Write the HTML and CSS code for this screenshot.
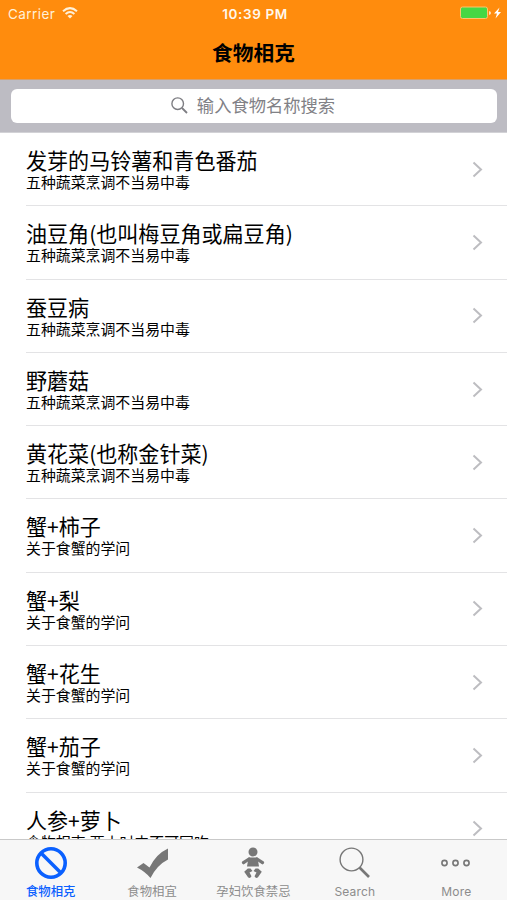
FILE: index.html
```html
<!DOCTYPE html>
<html lang="zh-CN">
<head>
<meta charset="utf-8">
<title>食物相克</title>
<link rel="stylesheet" href="styles.css">
</head>
<body>
<div class="app">
  <header class="header">
    <div class="status">
      <div class="carrier"><span>Carrier</span>
        <svg width="16" height="12" viewBox="0 0 16 12" fill="none" stroke="#fff1d8" stroke-width="2"><path d="M1 4.200Q8-2 15 4.200M3.600 7Q8 3.100 12.400 7"/><path d="M5.500 9Q8 6.800 10.500 9L8 11.500Z" fill="#fff1d8" stroke="none"/></svg>
      </div>
      <div class="time">10:39 PM</div>
      <svg class="battery" width="42" height="14" viewBox="0 0 42 14"><rect x=".5" y="1" width="27" height="11.500" rx="2" fill="#45d744" stroke="#ffc36b"/><path d="M29 5q2 .3 2 2t-2 2z" fill="#ffe4bd"/><path d="M39.500 1.500l-5.500 6h3l-1.500 5 5.500-6.500h-3z" fill="#fff"/></svg>
    </div>
    <h1 class="title">食物相克</h1>
  </header>
  <div class="searchbar"><div class="field">
    <svg width="17" height="17" viewBox="0 0 17 17" fill="none" stroke="#7d7d82" stroke-width="1.400"><circle cx="6.700" cy="6.700" r="5.800"/><path d="M11 11l5 5" stroke-width="1.800"/></svg>
    <span>输入食物名称搜索</span>
  </div></div>
  <main class="list">
    <div class="row"><div class="text"><div class="name">发芽的马铃薯和青色番茄</div><div class="note">五种蔬菜烹调不当易中毒</div></div><svg class="chev" viewBox="0 0 11 17"><path d="M1.500 1.500l7.500 7-7.500 7"/></svg></div>
    <div class="row"><div class="text"><div class="name">油豆角(也叫梅豆角或扁豆角)</div><div class="note">五种蔬菜烹调不当易中毒</div></div><svg class="chev" viewBox="0 0 11 17"><path d="M1.500 1.500l7.500 7-7.500 7"/></svg></div>
    <div class="row"><div class="text"><div class="name">蚕豆病</div><div class="note">五种蔬菜烹调不当易中毒</div></div><svg class="chev" viewBox="0 0 11 17"><path d="M1.500 1.500l7.500 7-7.500 7"/></svg></div>
    <div class="row"><div class="text"><div class="name">野蘑菇</div><div class="note">五种蔬菜烹调不当易中毒</div></div><svg class="chev" viewBox="0 0 11 17"><path d="M1.500 1.500l7.500 7-7.500 7"/></svg></div>
    <div class="row"><div class="text"><div class="name">黄花菜(也称金针菜)</div><div class="note">五种蔬菜烹调不当易中毒</div></div><svg class="chev" viewBox="0 0 11 17"><path d="M1.500 1.500l7.500 7-7.500 7"/></svg></div>
    <div class="row"><div class="text"><div class="name">蟹+柿子</div><div class="note">关于食蟹的学问</div></div><svg class="chev" viewBox="0 0 11 17"><path d="M1.500 1.500l7.500 7-7.500 7"/></svg></div>
    <div class="row"><div class="text"><div class="name">蟹+梨</div><div class="note">关于食蟹的学问</div></div><svg class="chev" viewBox="0 0 11 17"><path d="M1.500 1.500l7.500 7-7.500 7"/></svg></div>
    <div class="row"><div class="text"><div class="name">蟹+花生</div><div class="note">关于食蟹的学问</div></div><svg class="chev" viewBox="0 0 11 17"><path d="M1.500 1.500l7.500 7-7.500 7"/></svg></div>
    <div class="row"><div class="text"><div class="name">蟹+茄子</div><div class="note">关于食蟹的学问</div></div><svg class="chev" viewBox="0 0 11 17"><path d="M1.500 1.500l7.500 7-7.500 7"/></svg></div>
    <div class="row"><div class="text"><div class="name">人参+萝卜</div><div class="note">食物相克,两小时内不可同吃</div></div><svg class="chev" viewBox="0 0 11 17"><path d="M1.500 1.500l7.500 7-7.500 7"/></svg></div>
  </main>
  <nav class="tabs">
    <div class="tab active"><svg viewBox="0 0 36 36"><g fill="none" stroke="currentColor" stroke-width="3.600"><circle cx="18" cy="18" r="14.200"/><path d="M8 8l20 20"/></g></svg><span>食物相克</span></div>
    <div class="tab"><svg viewBox="0 0 36 36"><path fill="#777" d="M3 22.500l6.500-4.500 6 4.500Q22 9 34 3.500V14.500Q23 20 16.500 33Q11 26.500 3 22.500z"/></svg><span>食物相宜</span></div>
    <div class="tab"><svg viewBox="0 0 36 36"><circle cx="18" cy="7" r="4.500" fill="#777"/><path d="M8.500 17.700L14 14M27.500 17.700L22 14" fill="none" stroke="#777" stroke-width="3.200" stroke-linecap="round"/><path d="M13.500 12.500h9l1.500 9H12z" fill="#777"/><path d="M12.800 23.500h2.700l2 2.500-3 1.500 2 3.800q-1.500 2.800-3.500 1l-3.800-5.500zM23.200 23.500h-2.700l-2 2.500 3 1.500-2 3.800q1.500 2.800 3.500 1l3.800-5.500z" fill="#777"/></svg><span>孕妇饮食禁忌</span></div>
    <div class="tab"><svg viewBox="0 0 36 36" fill="none" stroke="#777"><circle cx="14.500" cy="14.500" r="11.400" stroke-width="1.400"/><path d="M22.500 22.500l9.500 9.500" stroke-width="2.600"/></svg><span class="latin">Search</span></div>
    <div class="tab"><svg viewBox="0 0 36 36" fill="none" stroke="#777" stroke-width="1.600"><circle cx="6.500" cy="18" r="2.600"/><circle cx="17.500" cy="18" r="2.600"/><circle cx="28.500" cy="18" r="2.600"/></svg><span class="latin">More</span></div>
  </nav>
</div>
</body>
</html>
```
FILE: styles.css
```css
* { box-sizing: border-box; }
body { margin: 0; font-family: Inter, "Noto Sans CJK SC", sans-serif; background: #fff; color: #000; }
.app { width: 507px; height: 900px; display: flex; flex-direction: column; overflow: hidden; }
.header { flex: none; height: 80px; background: #ff8c0d; border-bottom: 1px solid #d9a069; }
.status { height: 27px; display: grid; grid-template-columns: 1fr auto 1fr; align-items: center; padding: 0 5px 0 8px; color: #fff1d8; font-size: 13.500px; }
.carrier { display: flex; align-items: center; gap: 7px; letter-spacing: .45px; }
.carrier svg { margin-top: -2px; }
.time { font-weight: 600; font-size: 13.500px; letter-spacing: .6px; color: #fff8ed; }
.battery { justify-self: end; margin-top: -1px; }
.title { margin: 0; height: 50px; line-height: 50px; text-align: center; font-size: 20.700px; font-weight: 700; font-family: "Noto Sans CJK SC", sans-serif; }
.searchbar { flex: none; height: 53px; padding: 9px 10px 10px 11px; background: #bdbcc3; border-bottom: 1px solid #d2d2d6; }
.field { height: 34px; border-radius: 6px; background: #fff; display: flex; align-items: center; justify-content: center; gap: 9px; padding: 0 2px 1px 0; color: #818186; font: 17.300px/30px "Noto Sans CJK SC", sans-serif; }
.field span { margin-top: -2px; }
.list { flex: 1; min-height: 0; overflow: hidden; font-family: "Noto Sans CJK SC", sans-serif; }
.row { height: 73.300px; margin-left: 26px; padding-right: 24px; border-bottom: 1px solid #e3e3e5; display: flex; align-items: center; justify-content: space-between; }
.text { white-space: nowrap; padding-top: .6px; }
.name { font-size: 21.050px; line-height: 25px; }
.note { font-size: 14.900px; line-height: 18px; }
.chev { width: 11px; height: 17px; fill: none; stroke: #bdbdc1; stroke-width: 2; }
.tabs { flex: none; height: 61px; border-top: 1px solid #c9c9c9; background: #f7f7f7; display: grid; grid-template-columns: repeat(5, 1fr); }
.tab { display: flex; flex-direction: column; align-items: center; padding-top: 5px; color: #8c8c8c; font: 12.400px/20px "Noto Sans CJK SC", sans-serif; white-space: nowrap; }
.tab svg { width: 36px; height: 36px; }
.tab.active { color: #0a60ff; }
.tab.active span { font-weight: 500; }
.latin { font-family: Inter, sans-serif; font-size: 12px; letter-spacing: .2px; margin-top: 1px; }
```
